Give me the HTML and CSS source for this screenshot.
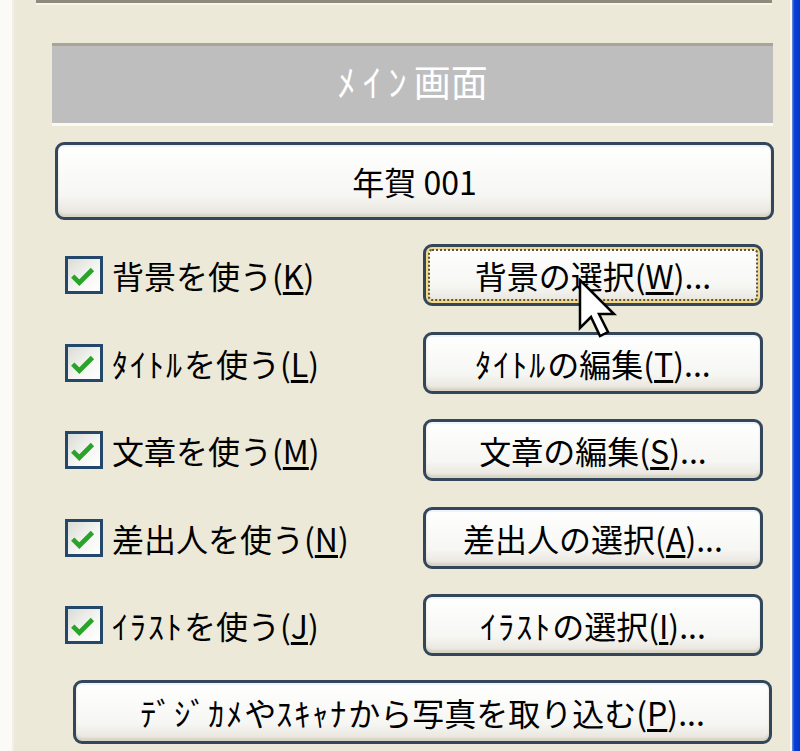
FILE: index.html
```html
<!DOCTYPE html>
<html lang="ja">

<head>
    <meta charset="UTF-8">
    <title>メイン画面</title>
    <link rel="stylesheet" href="styles.css">
</head>

<body>
    <div class="window">
        <div class="edge-left"></div>
        <div class="panel">
            <div class="topbar"></div>
            <div class="caption"><span><span class="hw">ﾒｲﾝ</span>画面</span></div>
            <button class="btn btn-name">年賀 001</button>
            <div class="rows">
                <div class="row">
                    <label class="check"><span class="box"><svg viewBox="0 0 32 32"><polyline points="4,15 11,22 25,8" /></svg></span><span>背景を使う(<u>K</u>)</span></label>
                    <button class="btn btn-side focused"><span>背景の選択(<u>W</u>)...</span></button>
                </div>
                <div class="row">
                    <label class="check"><span class="box"><svg viewBox="0 0 32 32"><polyline points="4,15 11,22 25,8" /></svg></span><span><span class="hw">ﾀｲﾄﾙ</span>を使う(<u>L</u>)</span></label>
                    <button class="btn btn-side"><span><span class="hw">ﾀｲﾄﾙ</span>の編集(<u>T</u>)...</span></button>
                </div>
                <div class="row">
                    <label class="check"><span class="box"><svg viewBox="0 0 32 32"><polyline points="4,15 11,22 25,8" /></svg></span><span>文章を使う(<u>M</u>)</span></label>
                    <button class="btn btn-side"><span>文章の編集(<u>S</u>)...</span></button>
                </div>
                <div class="row">
                    <label class="check"><span class="box"><svg viewBox="0 0 32 32"><polyline points="4,15 11,22 25,8" /></svg></span><span>差出人を使う(<u>N</u>)</span></label>
                    <button class="btn btn-side"><span>差出人の選択(<u>A</u>)...</span></button>
                </div>
                <div class="row">
                    <label class="check"><span class="box"><svg viewBox="0 0 32 32"><polyline points="4,15 11,22 25,8" /></svg></span><span><span class="hw">ｲﾗｽﾄ</span>を使う(<u>J</u>)</span></label>
                    <button class="btn btn-side"><span><span class="hw">ｲﾗｽﾄ</span>の選択(<u>I</u>)...</span></button>
                </div>
            </div>
            <button class="btn btn-photo"><span><span class="hw">ﾃﾞｼﾞｶﾒ</span>や<span class="hw">ｽｷｬﾅ</span>から写真を取り込む(<u>P</u>)...</span></button>
        </div>
        <div class="edge-right"></div>

        <!-- mouse pointer over the focused button -->
        <svg class="cursor" width="40" height="62" viewBox="0 0 40 62">
            <polygon points="2,2 2,50 13,39 22,58 30,54 21,36 36,36" />
        </svg>
    </div>
</body>

</html>
```

FILE: styles.css
```css
body {
    margin: 0;
    background: #ece9d8;
    font-family: "Noto Sans CJK JP", "Noto Sans", sans-serif;
    color: #000;
}

.window {
    position: relative;
    display: flex;
    width: 800px;
    height: 751px;
    overflow: hidden;
}

.edge-left {
    width: 12px;
    background: #fbfaf6;
    border-right: 2px solid #f2f0e6;
}

.panel {
    width: 776px;
    background: #ece9d8;
}

.edge-right {
    width: 8px;
    background: linear-gradient(to right, #6f8fe0, #0a3fd6 30%, #0037c8);
    border-left: 2px solid #f7f6f0;
}

.topbar {
    margin-left: 22px;
    width: 736px;
    height: 3px;
    background: #8f8b7c;
    border-bottom: 2px solid #f6f4ec;
}

.caption {
    box-sizing: border-box;
    margin: 38px 0 0 38px;
    width: 721px;
    height: 80px;
    padding-bottom: 7px;
    border-top: 3px solid #a8a597;
    background: #bebebe;
    box-shadow: 0 3px 0 #faf9f3;
    color: #fff;
    font-size: 37px;
    display: flex;
    align-items: center;
    justify-content: center;
}

.hw {
    letter-spacing: 2px;
}

.caption .hw {
    letter-spacing: 7px;
}

.btn {
    display: flex;
    align-items: center;
    justify-content: center;
    box-sizing: border-box;
    padding: 0;
    border: 3px solid #34475a;
    border-radius: 9px;
    background: linear-gradient(#ffffff, #f6f6f3 70%, #e6e3da);
    box-shadow: inset 0 -3px 2px #d9d4c6, inset 0 2px 0 #eef4fb;
    font-family: inherit;
    font-size: 32px;
    color: #000;
    white-space: nowrap;
}

.btn u {
    text-underline-offset: 3px;
}

.btn-name {
    margin: 19px 0 0 41px;
    width: 719px;
    height: 78px;
}

.rows {
    margin-top: 24px;
}

.row {
    display: grid;
    grid-template-columns: 409px 340px;
    align-items: center;
    height: 62px;
    margin-bottom: 25.5px;
}

.row:last-child {
    margin-bottom: 24px;
}

.check {
    display: flex;
    align-items: center;
    gap: 9px;
    padding-left: 51px;
    font-size: 32px;
    white-space: nowrap;
}

.check u {
    text-underline-offset: 3px;
}

.box {
    box-sizing: border-box;
    width: 38px;
    height: 38px;
    border: 3px solid #24476c;
    background: linear-gradient(135deg, #dcdcd6, #f6f6f3 60%, #ffffff);
    display: flex;
    align-items: center;
    justify-content: center;
}

.box svg {
    width: 30px;
    height: 30px;
    margin-top: 4px;
}

.box polyline {
    fill: none;
    stroke: #29a329;
    stroke-width: 5;
}

.btn-side {
    height: 62px;
    width: 340px;
}

.focused {
    position: relative;
    box-shadow: inset 0 0 0 3px #f1d98c, inset 0 -3px 2px #d9c88e;
}

.focused::after {
    content: "";
    position: absolute;
    inset: 2px;
    border: 2px dotted #5a5440;
    border-radius: 4px;
}

.btn-photo {
    margin-left: 59px;
    width: 699px;
    height: 64px;
}

.cursor {
    position: absolute;
    left: 578px;
    top: 278px;
}

.cursor polygon {
    fill: #fff;
    stroke: #000;
    stroke-width: 2.5;
    stroke-linejoin: miter;
}
```
